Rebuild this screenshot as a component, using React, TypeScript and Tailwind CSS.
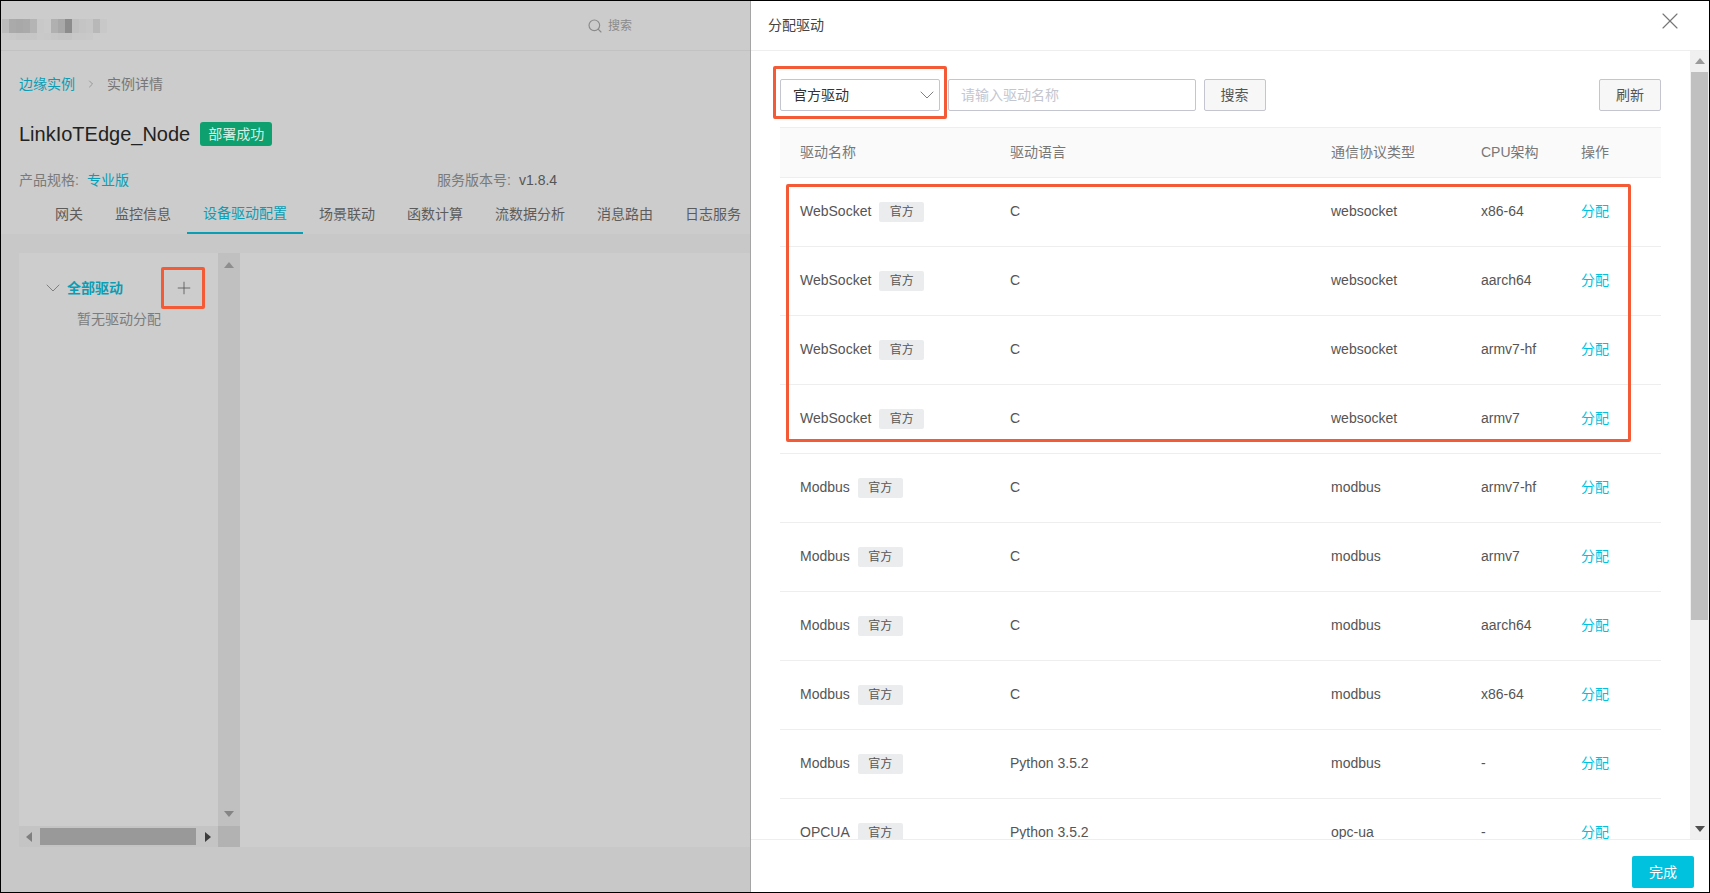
import { ChevronDown, ChevronRight, Plus, Search, X } from "lucide-react";

interface Driver {
  name: string;
  lang: string;
  protocol: string;
  cpu: string;
}

const drivers: Driver[] = [
  { name: "WebSocket", lang: "C", protocol: "websocket", cpu: "x86-64" },
  { name: "WebSocket", lang: "C", protocol: "websocket", cpu: "aarch64" },
  { name: "WebSocket", lang: "C", protocol: "websocket", cpu: "armv7-hf" },
  { name: "WebSocket", lang: "C", protocol: "websocket", cpu: "armv7" },
  { name: "Modbus", lang: "C", protocol: "modbus", cpu: "armv7-hf" },
  { name: "Modbus", lang: "C", protocol: "modbus", cpu: "armv7" },
  { name: "Modbus", lang: "C", protocol: "modbus", cpu: "aarch64" },
  { name: "Modbus", lang: "C", protocol: "modbus", cpu: "x86-64" },
  { name: "Modbus", lang: "Python 3.5.2", protocol: "modbus", cpu: "-" },
  { name: "OPCUA", lang: "Python 3.5.2", protocol: "opc-ua", cpu: "-" },
];

const tabs = ["网关", "监控信息", "设备驱动配置", "场景联动", "函数计算", "流数据分析", "消息路由", "日志服务"];

// the pixelated (censored) logo
const logoTop = [
  "bg-[#bbbbbb]", "bg-[#aaaaaa]", "bg-[#a8a8a8]", "bg-[#aaaaaa]", "bg-[#b4b4b4]",
  "bg-[#c8c8c8]", "bg-[#cacaca]", "bg-[#b0b0b0]", "bg-[#a8a8a8]", "bg-[#8c8c8c]",
  "bg-[#c0c0c0]", "bg-[#c4c4c4]", "bg-[#c6c6c6]", "bg-[#b8b8b8]", "bg-[#c8c8c8]",
];
const logoBottom = [
  "bg-[#c9c9c9]", "bg-[#c8c8c8]", "bg-[#c6c6c6]", "bg-[#c6c6c6]", "bg-[#c6c6c6]",
  "bg-[#c9c9c9]", "bg-[#c8c8c8]", "bg-[#c6c6c6]", "bg-[#c4c4c4]", "bg-[#c4c4c4]",
  "bg-[#c8c8c8]", "bg-[#c8c8c8]", "bg-[#c9c9c9]", "bg-[#cccccc]", "bg-[#cccccc]",
];

const Triangle = ({ dir, className }: { dir: "up" | "down" | "left" | "right"; className: string }) => {
  const points = {
    up: "0,7 5,1 10,7",
    down: "0,2 10,2 5,8",
    left: "7,0 7,10 1,5",
    right: "3,0 3,10 9,5",
  }[dir];
  return (
    <svg width="10" height="10" viewBox="0 0 10 10" className={className}>
      <polygon points={points} fill="currentColor" />
    </svg>
  );
};

const LeftPane = () => (
  <div className="flex h-full w-[749px] shrink-0 flex-col overflow-hidden bg-[#cccccc]">
    <div className="flex h-[50px] shrink-0 items-start justify-between border-b border-[#c2c2c2]">
      <div className="ml-px mt-[18px] flex flex-col blur-[0.5px]">
        <div className="flex h-[14px]">
          {logoTop.map((c, i) => (
            <div key={i} className={`w-[7px] ${c}`} />
          ))}
        </div>
        <div className="flex h-[7px]">
          {logoBottom.map((c, i) => (
            <div key={i} className={`w-[7px] ${c}`} />
          ))}
        </div>
      </div>
      <div className="mr-[118px] mt-[16px] flex items-center gap-[5px] text-[12px] text-[#8a8a8a]">
        <Search size={16} strokeWidth={1.75} />
        <span>搜索</span>
      </div>
    </div>

    <div className="mt-[23px] flex h-[20px] items-center pl-[18px] text-[14px]">
      <span className="text-[#0b9db4]">边缘实例</span>
      <ChevronRight size={12} strokeWidth={1.25} className="mx-[10px] text-[#777777]" />
      <span className="text-[#777777]">实例详情</span>
    </div>

    <div className="mt-[28px] flex h-[24px] items-center pl-[18px]">
      <span className="text-[20px] text-[#222222]">LinkIoTEdge_Node</span>
      <span className="ml-[10px] flex h-[24px] w-[72px] items-center justify-center rounded-[3px] bg-[#0fa070] text-[14px] text-[#d4efe4]">
        部署成功
      </span>
    </div>

    <div className="mt-[24px] flex h-[20px] items-center pl-[18px] text-[14px]">
      <span className="w-[68px] text-[#7a7a7a]">产品规格:</span>
      <span className="w-[350px] text-[#0b9db4]">专业版</span>
      <span className="w-[82px] text-[#7a7a7a]">服务版本号:</span>
      <span className="text-[#555555]">v1.8.4</span>
    </div>

    <div className="mt-[4px] flex h-[40px] shrink-0 pl-[38px] text-[14px] text-[#5c5c5c]">
      {tabs.map((t, i) => (
        <div
          key={t}
          className={
            i === 2
              ? "flex h-full items-center whitespace-nowrap border-b-2 border-[#0b9db4] px-4 text-[#0b9db4]"
              : "flex h-full items-center whitespace-nowrap px-4"
          }
        >
          {t}
        </div>
      ))}
    </div>

    <div className="flex flex-1 flex-col bg-[#c8c8c8] pl-[18px] pt-[19px] pb-[45px]">
      <div className="flex flex-1">
        <div className="flex w-[221px] flex-col">
          <div className="flex flex-1">
            <div className="w-[199px] bg-[#cdcdcd] pt-[25px]">
              <div className="flex h-[20px] items-center pl-[22px]">
                <ChevronDown size={24} strokeWidth={1} className="text-[#808080]" />
                <span className="ml-[2px] text-[14px] font-bold text-[#0b9db4]">全部驱动</span>
                <Plus size={20} strokeWidth={1} className="ml-[51px] text-[#555555]" />
              </div>
              <div className="mt-[11px] pl-[58px] text-[14px] leading-[20px] text-[#7c7c7c]">暂无驱动分配</div>
            </div>
            <div className="flex w-[22px] flex-col items-center justify-between bg-[#c0c0c0] pb-[7px] pt-[8px]">
              <Triangle dir="up" className="text-[#8e8e8e]" />
              <Triangle dir="down" className="text-[#858585]" />
            </div>
          </div>
          <div className="flex h-[21px] items-center bg-[#c4c4c4]">
            <Triangle dir="left" className="ml-[6px] text-[#7f7f7f]" />
            <div className="ml-[5px] h-[17px] w-[156px] bg-[#999999]" />
            <Triangle dir="right" className="ml-[6px] text-[#3c3c3c]" />
            <div className="ml-auto h-full w-[22px] bg-[#b2b2b2]" />
          </div>
        </div>
        <div className="flex-1 bg-[#cdcdcd]" />
      </div>
    </div>
  </div>
);

const DriverRow = ({ d }: { d: Driver }) => (
  <div className="grid h-[69px] shrink-0 grid-cols-[210px_321px_150px_100px_100px] items-center border-b border-[#eeeeee] text-[14px] text-[#555555]">
    <div className="flex items-center pl-5">
      <span className="pb-[2px]">{d.name}</span>
      <span className="ml-2 flex h-[20px] w-[45px] items-center justify-center rounded-[2px] bg-[#ebecee] text-[12px]">
        官方
      </span>
    </div>
    <div className="pb-[2px] pl-5">{d.lang}</div>
    <div className="pb-[2px] pl-5">{d.protocol}</div>
    <div className="pb-[2px] pl-5">{d.cpu}</div>
    <div className="pb-[2px] pl-5 text-[#00c1de]">分配</div>
  </div>
);

const AssignDrawer = () => (
  <div className="relative flex h-full flex-1 flex-col border-l border-[#a5a5a5] bg-white">
    <div className="flex h-[50px] shrink-0 items-center justify-between border-b border-[#eeeeee] pl-[17px] pr-[25px]">
      <span className="text-[14px] text-[#444444]">分配驱动</span>
      <X size={28} strokeWidth={1} className="-mt-[9px] text-[#777777]" />
    </div>

    <div className="flex h-0 flex-1">
      <div className="flex-1 overflow-hidden pl-[29px] pt-[28px]">
        <div className="flex h-[32px] w-[881px] items-center text-[14px]">
          <div className="flex h-full w-[160px] items-center justify-between rounded-[2px] border border-[#c4c6cf] pl-[12px] text-[#333333]">
            <span>官方驱动</span>
            <ChevronDown size={24} strokeWidth={1} className="text-[#808080]" />
          </div>
          <div className="ml-[8px] flex h-full w-[248px] items-center rounded-[2px] border border-[#c4c6cf] pl-[12px] text-[#c4c6cf]">
            请输入驱动名称
          </div>
          <div className="ml-[8px] flex h-full w-[62px] items-center justify-center rounded-[2px] border border-[#c4c6cf] bg-[#f7f7f7] pr-px text-[#555555]">
            搜索
          </div>
          <div className="ml-auto flex h-full w-[62px] items-center justify-center rounded-[2px] border border-[#c4c6cf] bg-[#f7f7f7] text-[#555555]">
            刷新
          </div>
        </div>

        <div className="mt-[16px] flex w-[881px] flex-col">
          <div className="grid h-[51px] shrink-0 grid-cols-[210px_321px_150px_100px_100px] items-center border-y border-[#eeeeee] bg-[#fafafa] text-[14px] text-[#777777]">
            <div className="pl-5">驱动名称</div>
            <div className="pl-5">驱动语言</div>
            <div className="pl-5">通信协议类型</div>
            <div className="pl-5">CPU架构</div>
            <div className="pl-5">操作</div>
          </div>
          {drivers.map((d, i) => (
            <DriverRow key={i} d={d} />
          ))}
        </div>
      </div>

      <div className="flex w-[19px] shrink-0 flex-col items-center bg-[#f0f0f0]">
        <div className="flex h-[21px] w-full items-center justify-center">
          <Triangle dir="up" className="text-[#9a9a9a]" />
        </div>
        <div className="h-[548px] w-[17px] bg-[#c0c0c0]" />
        <div className="mt-auto flex h-[21px] w-full items-center justify-center">
          <Triangle dir="down" className="text-[#505050]" />
        </div>
      </div>
    </div>

    <div className="flex h-[53px] shrink-0 items-start justify-end border-t border-[#eeeeee] pr-[15px] pt-[16px]">
      <div className="flex h-[32px] w-[62px] items-center justify-center rounded-[2px] bg-[#00c1de] text-[14px] text-white">
        完成
      </div>
    </div>

    {/* red annotation boxes */}
    <div className="absolute left-[22px] top-[65px] h-[53px] w-[174px] rounded-[2px] border-[3px] border-[#f55a36]" />
    <div className="absolute left-[35px] top-[183px] h-[258px] w-[845px] rounded-[2px] border-[3px] border-[#f55a36]" />
  </div>
);

export default function App() {
  return (
    <div className="relative flex h-[893px] w-[1710px] overflow-hidden border border-black [font-family:'Liberation_Sans','Noto_Sans_CJK_SC',sans-serif]">
      <LeftPane />
      <AssignDrawer />
      <div className="absolute left-[160px] top-[266px] h-[42px] w-[44px] rounded-[2px] border-[3px] border-[#f55a36]" />
    </div>
  );
}
